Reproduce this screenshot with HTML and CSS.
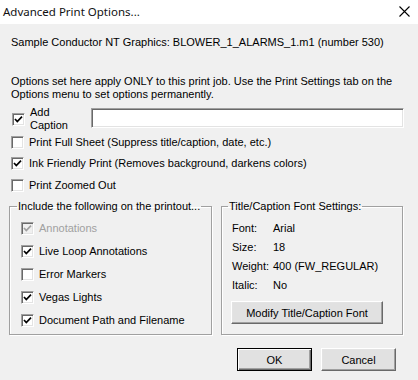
FILE: index.html
```html
<!DOCTYPE html>
<html>
<head>
<meta charset="utf-8">
<link rel="stylesheet" href="styles.css">
</head>
<body>
<div class="dialog">
  <div class="titlebar">
    <span class="title">Advanced Print Options...</span>
    <svg class="close" width="11" height="11" viewBox="0 0 11 11"><path d="M0.5 0.5 L10.5 10.5 M10.5 0.5 L0.5 10.5" stroke="#000" stroke-width="1.1" fill="none"/></svg>
  </div>
  <div class="content">
    <p class="info">Sample Conductor NT Graphics: BLOWER_1_ALARMS_1.m1 (number 530)</p>
    <p class="note">Options set here apply ONLY to this print job. Use the Print Settings tab on the Options menu to set options permanently.</p>

    <div class="caption-row">
      <label class="check">
        <span class="box"><svg viewBox="0 0 11 11" width="11" height="11"><path d="M2 5 L4.3 7.6 L9 2.6" stroke="#000" stroke-width="1.7" fill="none"/></svg></span>
        <span class="two-line">Add<br>Caption</span>
      </label>
      <div class="textfield"></div>
    </div>

    <label class="check row-full"><span class="box"></span><span>Print Full Sheet (Suppress title/caption, date, etc.)</span></label>
    <label class="check row-ink"><span class="box"><svg viewBox="0 0 11 11" width="11" height="11"><path d="M2 5 L4.3 7.6 L9 2.6" stroke="#000" stroke-width="1.7" fill="none"/></svg></span><span>Ink Friendly Print (Removes background, darkens colors)</span></label>
    <label class="check row-zoom"><span class="box"></span><span>Print Zoomed Out</span></label>

    <div class="groups">
      <fieldset class="group group-left">
        <legend>Include the following on the printout...</legend>
        <div class="glist">
          <label class="check disabled"><span class="box"><svg viewBox="0 0 11 11" width="11" height="11"><path d="M2 5 L4.3 7.6 L9 2.6" stroke="#a0a0a0" stroke-width="1.7" fill="none"/></svg></span><span>Annotations</span></label>
          <label class="check"><span class="box"><svg viewBox="0 0 11 11" width="11" height="11"><path d="M2 5 L4.3 7.6 L9 2.6" stroke="#000" stroke-width="1.7" fill="none"/></svg></span><span>Live Loop Annotations</span></label>
          <label class="check"><span class="box"></span><span>Error Markers</span></label>
          <label class="check"><span class="box"><svg viewBox="0 0 11 11" width="11" height="11"><path d="M2 5 L4.3 7.6 L9 2.6" stroke="#000" stroke-width="1.7" fill="none"/></svg></span><span>Vegas Lights</span></label>
          <label class="check"><span class="box"><svg viewBox="0 0 11 11" width="11" height="11"><path d="M2 5 L4.3 7.6 L9 2.6" stroke="#000" stroke-width="1.7" fill="none"/></svg></span><span>Document Path and Filename</span></label>
        </div>
      </fieldset>
      <fieldset class="group group-right">
        <legend>Title/Caption Font Settings:</legend>
        <div class="props">
          <span class="k">Font:</span><span class="v">Arial</span>
          <span class="k">Size:</span><span class="v">18</span>
          <span class="k">Weight:</span><span class="v">400 (FW_REGULAR)</span>
          <span class="k">Italic:</span><span class="v">No</span>
        </div>
        <button class="btn btn-modify">Modify Title/Caption Font</button>
      </fieldset>
    </div>

    <div class="actions">
      <button class="btn btn-default">OK</button>
      <button class="btn">Cancel</button>
    </div>
  </div>
</div>
</body>
</html>
```
FILE: styles.css
```css
html, body {
  margin: 0;
  padding: 0;
}
body {
  width: 418px;
  height: 380px;
  background: #f0f0f0;
  font-family: "Liberation Sans", Arial, sans-serif;
  font-size: 11px;
  color: #000;
  overflow: hidden;
}
.dialog {
  width: 418px;
  height: 380px;
}
.titlebar {
  height: 24px;
  background: #fff;
  display: flex;
  align-items: center;
  justify-content: space-between;
  padding: 0 8px 0 3px;
  box-sizing: border-box;
}
.title {
  font-family: "Noto Sans", sans-serif;
  font-size: 11.5px;
  color: #111;
  margin-top: -1px;
}
.close {
  display: block;
  margin-top: -1px;
}
.content {
  padding: 0 0 0 11px;
}
p {
  margin: 0;
  line-height: 13px;
}
.info {
  margin-top: 12px;
}
.note {
  margin-top: 26px;
  width: 395px;
}
.check {
  display: flex;
  align-items: center;
  height: 13px;
  line-height: 13px;
  gap: 5px;
  white-space: nowrap;
}
.box {
  width: 13px;
  height: 13px;
  box-sizing: border-box;
  background: #fff;
  border: 1px solid;
  border-color: #a0a0a0 #fff #fff #a0a0a0;
  box-shadow: inset 1px 1px 0 #696969, inset -1px -1px 0 #e3e3e3;
  flex: none;
  display: flex;
}
.box svg {
  display: block;
}
.caption-row {
  display: flex;
  align-items: center;
  margin-top: 5px;
  height: 26px;
}
.caption-row .check {
  height: 26px;
  width: 79px;
  padding-left: 1px;
  gap: 5px;
}
.two-line {
  line-height: 13px;
}
.textfield {
  width: 313px;
  height: 20px;
  box-sizing: border-box;
  background: #fff;
  border: 1px solid;
  border-color: #a0a0a0 #fff #fff #a0a0a0;
  box-shadow: inset 1px 1px 0 #696969, inset -1px -1px 0 #e3e3e3;
  margin-top: -3px;
}
.row-full {
  margin-top: 4px;
}
.row-ink {
  margin-top: 8px;
}
.row-zoom {
  margin-top: 9px;
}
.groups {
  display: flex;
  gap: 9px;
  margin-top: 8px;
  margin-left: -2px;
}
.group {
  margin: 0;
  padding: 0 0 0 11px;
  border: 1px solid #a0a0a0;
  box-shadow: inset 1px 1px 0 #fff, 1px 1px 0 #fff;
  box-sizing: border-box;
  height: 135px;
  min-width: 0;
}
.group legend {
  padding: 0 1px;
  margin-left: -4px;
  line-height: 13px;
  height: 13px;
}
.group-left {
  width: 203px;
}
.group-right {
  width: 182px;
  padding-left: 10px;
}
.glist {
  display: flex;
  flex-direction: column;
  gap: 10px;
  margin-top: 9px;
}
.disabled {
  color: #a0a0a0;
}
.disabled .box {
  background: #f0f0f0;
}
.props {
  display: grid;
  grid-template-columns: 41px auto;
  grid-auto-rows: 19px;
  line-height: 19px;
  margin-top: 6px;
}
.btn {
  font-family: "Liberation Sans", Arial, sans-serif;
  font-size: 11px;
  color: #000;
  background: #e1e1e1;
  height: 23px;
  box-sizing: border-box;
  border: 1px solid;
  border-color: #fff #696969 #696969 #fff;
  box-shadow: inset -1px -1px 0 #a0a0a0, inset 1px 1px 0 #e3e3e3;
  padding: 0;
  margin: 0;
  display: block;
}
.btn-modify {
  width: 152px;
  margin-top: 6px;
  margin-left: -1px;
}
.actions {
  display: flex;
  gap: 9px;
  margin-top: 13px;
  padding-left: 226px;
}
.actions .btn {
  width: 75px;
}
.btn-default {
  border: 1px solid #000;
  box-shadow: inset 1px 1px 0 #fff, inset -1px -1px 0 #696969, inset -2px -2px 0 #a0a0a0;
}
```
